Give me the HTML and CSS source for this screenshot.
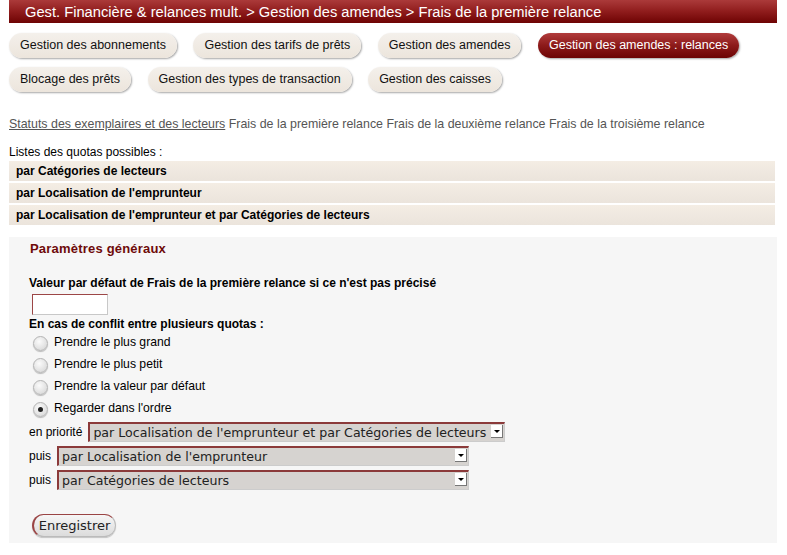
FILE: index.html
```html
<!DOCTYPE html>
<html lang="fr">
<head>
<meta charset="utf-8">
<title>Frais de la première relance</title>
<link rel="stylesheet" href="styles.css">
</head>
<body>
<div class="page">
  <div class="crumb">Gest. Financière &amp; relances mult. &gt; Gestion des amendes &gt; Frais de la première relance</div>

  <nav class="tabs">
    <a class="tab">Gestion des abonnements</a>
    <a class="tab">Gestion des tarifs de prêts</a>
    <a class="tab">Gestion des amendes</a>
    <a class="tab active">Gestion des amendes : relances</a>
    <a class="tab">Blocage des prêts</a>
    <a class="tab">Gestion des types de transaction</a>
    <a class="tab">Gestion des caisses</a>
  </nav>

  <div class="sublinks"><a class="sublink">Statuts des exemplaires et des lecteurs</a> Frais de la première relance Frais de la deuxième relance Frais de la troisième relance</div>

  <div class="quotas-title">Listes des quotas possibles :</div>
  <div class="quota-row">par Catégories de lecteurs</div>
  <div class="quota-row">par Localisation de l'emprunteur</div>
  <div class="quota-row">par Localisation de l'emprunteur et par Catégories de lecteurs</div>

  <div class="panel">
    <h3 class="panel-title">Paramètres généraux</h3>
    <div class="label label-first">Valeur par défaut de Frais de la première relance si ce n'est pas précisé</div>
    <input class="text-input" type="text">
    <div class="label label-conflict">En cas de conflit entre plusieurs quotas :</div>
    <label class="radio-row"><input type="radio" name="c" class="radio"><span>Prendre le plus grand</span></label>
    <label class="radio-row"><input type="radio" name="c" class="radio"><span>Prendre le plus petit</span></label>
    <label class="radio-row"><input type="radio" name="c" class="radio"><span>Prendre la valeur par défaut</span></label>
    <label class="radio-row"><input type="radio" name="c" class="radio" checked><span>Regarder dans l'ordre</span></label>

    <div class="order-row first">
      <span class="order-label">en priorité</span>
      <span class="sel-wrap"><select class="sel sel-wide"><option>par Localisation de l'emprunteur et par Catégories de lecteurs</option></select></span>
    </div>
    <div class="order-row">
      <span class="order-label">puis</span>
      <span class="sel-wrap"><select class="sel sel-std"><option>par Localisation de l'emprunteur</option></select></span>
    </div>
    <div class="order-row">
      <span class="order-label">puis</span>
      <span class="sel-wrap"><select class="sel sel-std"><option>par Catégories de lecteurs</option></select></span>
    </div>

    <button class="save" type="button">Enregistrer</button>
  </div>
</div>
</body>
</html>
```

FILE: styles.css
```css
html, body {
  margin: 0;
  padding: 0;
  background: #ffffff;
}

body {
  font-family: "Liberation Sans", Arial, sans-serif;
  font-size: 12px;
  color: #000;
}

.page {
  padding: 0 10px 0 9px;
  width: 768px;
}

.crumb {
  height: 23px;
  line-height: 24px;
  padding-left: 16px;
  color: #fff;
  font-size: 14.7px;
  background: linear-gradient(#ab3a3a, #8f1c1c 50%, #6e0303);
}

.tabs {
  display: flex;
  flex-wrap: wrap;
  column-gap: 16.5px;
  row-gap: 9px;
  margin-top: 10px;
  width: 760px;
}

.tab {
  display: block;
  height: 25px;
  line-height: 25px;
  padding: 0 11px;
  border-radius: 13px;
  background: linear-gradient(#f4f0eb, #ece5dc);
  box-shadow: 1px 1px 2px rgba(0, 0, 0, 0.35);
  color: #111;
  font-size: 12.5px;
  white-space: nowrap;
}

.tab.active {
  background: linear-gradient(#b13c3c, #8c1a1a 50%, #6c0404);
  color: #fff;
}

.sublinks {
  margin-top: 24px;
  color: #555;
  font-size: 12.4px;
  line-height: 16px;
}

.sublink {
  color: #555;
  text-decoration: underline;
}

.quotas-title {
  margin-top: 13px;
  line-height: 14px;
  font-size: 12px;
}

.quota-row {
  height: 20px;
  line-height: 20px;
  margin-top: 2px;
  padding-left: 7px;
  width: 759px;
  font-weight: bold;
  font-size: 12px;
  background: linear-gradient(#f4ede4, #ebe4dc);
}

.panel {
  margin-top: 12px;
  background: #f6f6f6;
  padding: 4px 20px 6px 20px;
  height: 296px;
}

.panel-title {
  margin: 0 0 0 1px;
  height: 16px;
  line-height: 16px;
  font-size: 13px;
  font-weight: bold;
  color: #6e0a0a;
  letter-spacing: 0.2px;
}

.label {
  font-weight: bold;
  font-size: 12px;
  line-height: 16px;
}

.label-first {
  margin-top: 18px;
}

.label-conflict {
  margin-bottom: -1px;
}

.text-input {
  display: block;
  box-sizing: border-box;
  margin: 3px 0 1px 3px;
  width: 76px;
  height: 21px;
  border: 1px solid #c8c8c8;
  border-top-color: #9c4646;
  border-left-color: #9c4646;
  background: #fff;
  padding: 0;
}

.radio-row {
  display: flex;
  align-items: center;
  height: 22px;
  padding-left: 4px;
  font-size: 12.2px;
}

.radio {
  appearance: none;
  -webkit-appearance: none;
  margin: 2px 6px 0 0;
  width: 15px;
  height: 15px;
  border-radius: 50%;
  border: 1px solid #b4b4b4;
  box-sizing: border-box;
  background: radial-gradient(circle at 40% 35%, #fbfbfb, #dcdcdc 75%);
  box-shadow: 0 1px 1px rgba(0, 0, 0, 0.25);
  position: relative;
}

.radio:checked::after {
  content: "";
  position: absolute;
  left: 4px;
  top: 4px;
  width: 5px;
  height: 5px;
  border-radius: 50%;
  background: #222;
}

.order-row {
  display: flex;
  align-items: center;
  margin-top: 4px;
  height: 20px;
}

.order-row.first {
  margin-top: 3px;
}

.order-label {
  font-family: "Liberation Sans", Arial, sans-serif;
  font-size: 12px;
  margin-right: 6px;
}

.sel-wrap {
  position: relative;
  display: inline-block;
  height: 20px;
}

.sel-wrap::after {
  content: "";
  position: absolute;
  right: 2px;
  top: 3px;
  width: 12px;
  height: 13px;
  background: #fff;
  border-right: 1px solid #777;
  border-bottom: 1px solid #777;
  box-sizing: border-box;
  pointer-events: none;
}

.sel-wrap::before {
  content: "";
  position: absolute;
  right: 5px;
  top: 8px;
  border-left: 3px solid transparent;
  border-right: 3px solid transparent;
  border-top: 3px solid #000;
  z-index: 1;
  pointer-events: none;
}

.sel {
  appearance: none;
  -webkit-appearance: none;
  box-sizing: border-box;
  height: 20px;
  margin: 0;
  padding: 0 0 0 3px;
  font-family: "DejaVu Sans", sans-serif;
  font-size: 12.6px;
  color: #222;
  background: #d6d3d0;
  border: 1px solid #ccc;
  border-top: 2px solid #8b3a3a;
  border-left: 2px solid #8b3a3a;
  border-radius: 0;
  line-height: 16px;
}

.sel-wide {
  width: 417px;
}

.sel-std {
  width: 412px;
}

.save {
  display: block;
  margin: 24px 0 0 3px;
  height: 23px;
  width: 84px;
  padding: 0;
  font-family: "DejaVu Sans", sans-serif;
  font-size: 13px;
  color: #222;
  border-radius: 12px;
  border: 1px solid #bbb;
  border-left: 2px solid #9a4444;
  border-top: 1px solid #9a4444;
  background: linear-gradient(#f6f6f6, #dcdcdc);
  box-shadow: 0 1px 1px rgba(0, 0, 0, 0.2);
}
```
